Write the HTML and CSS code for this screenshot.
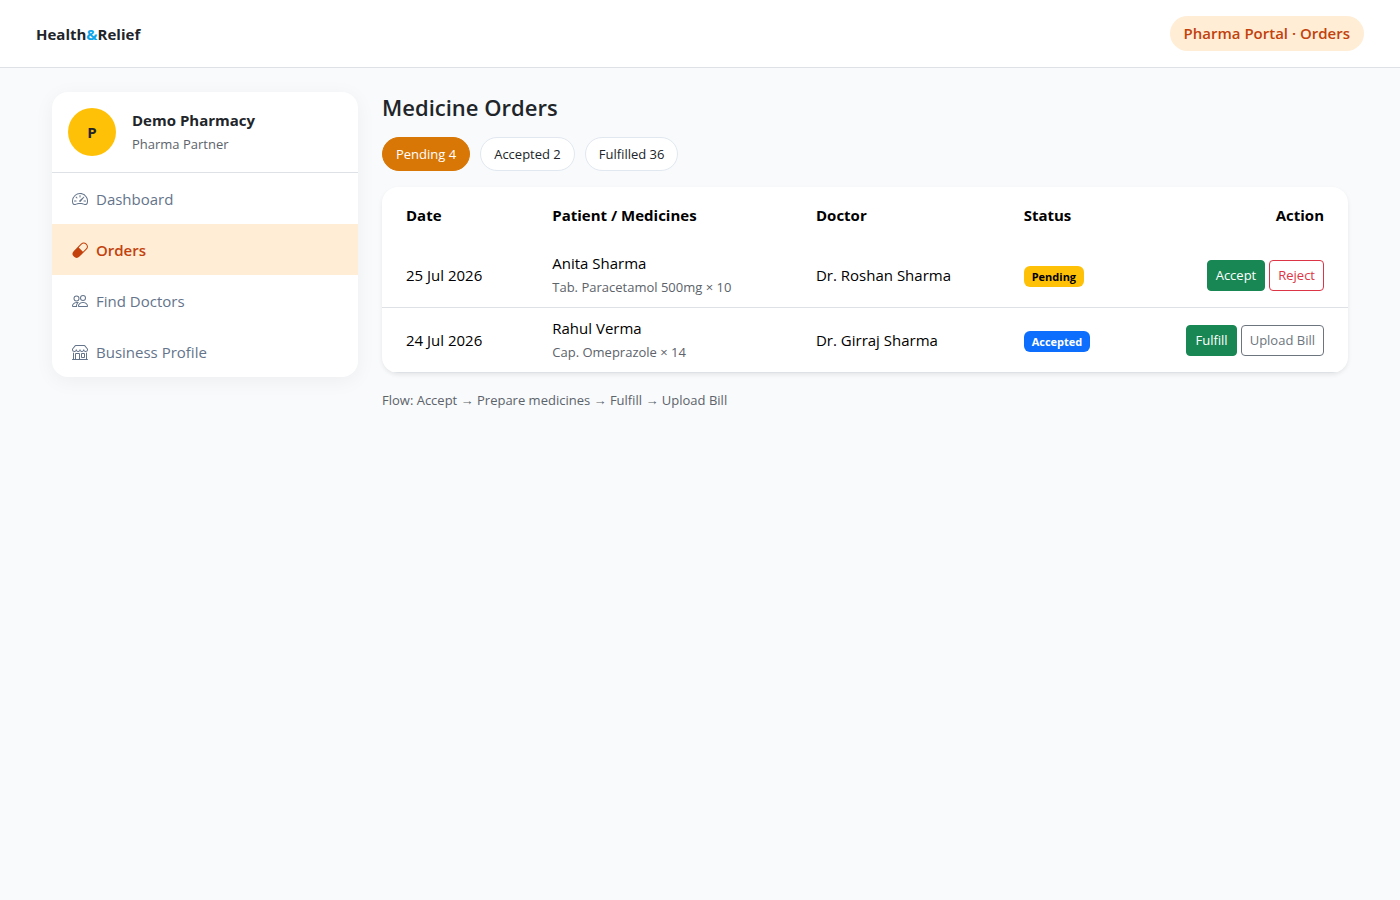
FILE: index.html
```html
<!DOCTYPE html>
<html lang="en">
<head>
    <meta charset="UTF-8">
    <meta name="viewport" content="width=device-width, initial-scale=1.0">
    <title>Orders - Health&amp;Relief</title>
    <link rel="stylesheet" href="styles.css">
</head>
<body>
    <header class="topbar">
        <a href="#" class="brand">Health<span>&amp;</span>Relief</a>
        <div class="portal-badge">Pharma Portal · Orders</div>
    </header>

    <div class="container">
        <aside class="sidebar">
            <div class="profile">
                <div class="avatar">P</div>
                <div>
                    <div class="profile-name">Demo Pharmacy</div>
                    <div class="small">Pharma Partner</div>
                </div>
            </div>
            <nav class="menu">
                <a href="#">
                    <svg width="16" height="16" viewBox="0 0 16 16" fill="currentColor" aria-hidden="true">
                        <path d="M8 4a.5.5 0 0 1 .5.5V6a.5.5 0 0 1-1 0V4.5A.5.5 0 0 1 8 4M3.732 5.732a.5.5 0 0 1 .707 0l.915.914a.5.5 0 1 1-.708.708l-.914-.915a.5.5 0 0 1 0-.707M2 10a.5.5 0 0 1 .5-.5h1.586a.5.5 0 0 1 0 1H2.5A.5.5 0 0 1 2 10m9.5 0a.5.5 0 0 1 .5-.5h1.5a.5.5 0 0 1 0 1H12a.5.5 0 0 1-.5-.5m.754-4.246a.39.39 0 0 0-.527-.02L7.547 9.31a.91.91 0 1 0 1.302 1.258l3.434-4.297a.39.39 0 0 0-.029-.518z"/>
                        <path fill-rule="evenodd" d="M0 10a8 8 0 1 1 15.547 2.661c-.442 1.253-1.845 1.602-2.932 1.25C11.309 13.488 9.475 13 8 13c-1.474 0-3.31.488-4.615.911-1.087.352-2.49.003-2.932-1.25A8 8 0 0 1 0 10m8-7a7 7 0 0 0-6.603 9.329c.203.575.923.876 1.68.63C4.397 12.533 6.358 12 8 12s3.604.532 4.923.96c.757.245 1.477-.056 1.68-.631A7 7 0 0 0 8 3"/>
                    </svg>
                    Dashboard
                </a>
                <a href="#" class="active">
                    <svg width="16" height="16" viewBox="0 0 16 16" fill="currentColor" aria-hidden="true">
                        <path d="M1.828 8.9 8.9 1.827a4 4 0 1 1 5.657 5.657l-7.07 7.071A4 4 0 1 1 1.827 8.9Zm9.128.771 2.893-2.893a3 3 0 1 0-4.243-4.242L6.713 5.429z"/>
                    </svg>
                    Orders
                </a>
                <a href="#">
                    <svg width="16" height="16" viewBox="0 0 16 16" fill="currentColor" aria-hidden="true">
                        <path d="M15 14s1 0 1-1-1-4-5-4-5 3-5 4 1 1 1 1zm-7.978-1L7 12.996c.001-.264.167-1.03.76-1.72C8.312 10.629 9.282 10 11 10c1.717 0 2.687.63 3.24 1.276.593.69.758 1.457.76 1.72l-.008.002-.014.002zM11 7a2 2 0 1 0 0-4 2 2 0 0 0 0 4m3-2a3 3 0 1 1-6 0 3 3 0 0 1 6 0M6.936 9.28a6 6 0 0 0-1.23-.247A7 7 0 0 0 5 9c-4 0-5 3-5 4q0 1 1 1h4.216A2.24 2.24 0 0 1 5 13c0-1.01.377-2.042 1.09-2.904.243-.294.526-.569.846-.816M4.92 10A5.5 5.5 0 0 0 4 13H1c0-.26.164-1.03.76-1.724.545-.636 1.492-1.256 3.16-1.275ZM1.5 5.5a3 3 0 1 1 6 0 3 3 0 0 1-6 0m3-2a2 2 0 1 0 0 4 2 2 0 0 0 0-4"/>
                    </svg>
                    Find Doctors
                </a>
                <a href="#">
                    <svg width="16" height="16" viewBox="0 0 16 16" fill="currentColor" aria-hidden="true">
                        <path d="M2.97 1.35A1 1 0 0 1 3.73 1h8.54a1 1 0 0 1 .76.35l2.609 3.044A1.5 1.5 0 0 1 16 5.37v.255a2.375 2.375 0 0 1-4.25 1.458A2.37 2.37 0 0 1 9.875 8 2.37 2.37 0 0 1 8 7.083 2.37 2.37 0 0 1 6.125 8a2.37 2.37 0 0 1-1.875-.917A2.375 2.375 0 0 1 0 5.625V5.37a1.5 1.5 0 0 1 .361-.976zm1.78 4.275a1.375 1.375 0 0 0 2.75 0 .5.5 0 0 1 1 0 1.375 1.375 0 0 0 2.75 0 .5.5 0 0 1 1 0 1.375 1.375 0 1 0 2.75 0V5.37a.5.5 0 0 0-.12-.325L12.27 2H3.73L1.12 5.045A.5.5 0 0 0 1 5.37v.255a1.375 1.375 0 0 0 2.75 0 .5.5 0 0 1 1 0M1.5 8.5A.5.5 0 0 1 2 9v6h1v-5a1 1 0 0 1 1-1h3a1 1 0 0 1 1 1v5h6V9a.5.5 0 0 1 1 0v6h.5a.5.5 0 0 1 0 1H.5a.5.5 0 0 1 0-1H1V9a.5.5 0 0 1 .5-.5M4 15h3v-5H4zm5-5a1 1 0 0 1 1-1h2a1 1 0 0 1 1 1v3a1 1 0 0 1-1 1h-2a1 1 0 0 1-1-1zm3 0h-2v3h2z"/>
                    </svg>
                    Business Profile
                </a>
            </nav>
        </aside>

        <main class="content">
            <h1>Medicine Orders</h1>

            <div class="tabs">
                <button type="button" class="tab active">Pending 4</button>
                <button type="button" class="tab">Accepted 2</button>
                <button type="button" class="tab">Fulfilled 36</button>
            </div>

            <div class="card">
                <table class="orders">
                    <thead>
                        <tr>
                            <th class="col-date">Date</th>
                            <th class="col-patient">Patient / Medicines</th>
                            <th class="col-doctor">Doctor</th>
                            <th class="col-status">Status</th>
                            <th class="col-action">Action</th>
                        </tr>
                    </thead>
                    <tbody>
                        <tr>
                            <td>25 Jul 2026</td>
                            <td>Anita Sharma<div class="small">Tab. Paracetamol 500mg × 10</div></td>
                            <td>Dr. Roshan Sharma</td>
                            <td><span class="badge badge-pending">Pending</span></td>
                            <td>
                                <div class="actions">
                                    <button type="button" class="btn btn-success">Accept</button>
                                    <button type="button" class="btn btn-danger">Reject</button>
                                </div>
                            </td>
                        </tr>
                        <tr>
                            <td>24 Jul 2026</td>
                            <td>Rahul Verma<div class="small">Cap. Omeprazole × 14</div></td>
                            <td>Dr. Girraj Sharma</td>
                            <td><span class="badge badge-accepted">Accepted</span></td>
                            <td>
                                <div class="actions">
                                    <button type="button" class="btn btn-success">Fulfill</button>
                                    <button type="button" class="btn btn-secondary">Upload Bill</button>
                                </div>
                            </td>
                        </tr>
                    </tbody>
                </table>
            </div>

            <p class="flow small">Flow: Accept → Prepare medicines → Fulfill → Upload Bill</p>
        </main>
    </div>
</body>
</html>
```
FILE: styles.css
```css
* {
    box-sizing: border-box;
}

body {
    margin: 0;
    font-family: "Segoe UI", "Open Sans", "Noto Sans", sans-serif;
    font-size: 15px;
    line-height: 24px;
    color: #212529;
    background-color: #f8fafc;
}

a {
    color: inherit;
    text-decoration: none;
}

button {
    font-family: inherit;
    cursor: pointer;
}

.small {
    font-size: 13px;
    color: #5c636a;
}

/* Top bar */
.topbar {
    display: flex;
    justify-content: space-between;
    align-items: center;
    padding: 16px 36px;
    background-color: #fff;
    border-bottom: 1px solid #dee2e6;
}

.brand {
    font-weight: 700;
}

.brand span {
    color: #0ea5e9;
}

.portal-badge {
    padding: 6px 14px;
    line-height: 23px;
    font-weight: 600;
    color: #c2410c;
    background-color: #ffedd5;
    border-radius: 20px;
}

/* Page layout */
.container {
    display: grid;
    grid-template-columns: minmax(0, 306fr) minmax(0, 966fr);
    gap: 24px;
    align-items: start;
    max-width: 1320px;
    margin: 0 auto;
    padding: 24px 12px;
}

/* Sidebar */
.sidebar {
    background-color: #fff;
    border-radius: 16px;
    box-shadow: 0 4px 20px rgba(0, 0, 0, 0.05);
    overflow: hidden;
}

.profile {
    display: flex;
    align-items: center;
    gap: 16px;
    padding: 16px;
    border-bottom: 1px solid #dee2e6;
}

.avatar {
    display: flex;
    align-items: center;
    justify-content: center;
    width: 48px;
    height: 48px;
    font-weight: 700;
    background-color: #ffc107;
    border-radius: 50%;
}

.profile-name {
    font-weight: 700;
}

.menu a {
    display: flex;
    align-items: center;
    gap: 8px;
    padding: 14px 20px 13px;
    color: #64748b;
}

.menu a.active {
    font-weight: 600;
    color: #c2410c;
    background-color: #ffedd5;
}

/* Orders */
h1 {
    margin: 0 0 15px;
    font-size: 22px;
    font-weight: 600;
    line-height: 30px;
}

.tabs {
    display: flex;
    gap: 10px;
    margin-bottom: 16px;
}

.tab {
    padding: 6px 13px;
    font-size: 13px;
    line-height: 20px;
    color: #212529;
    background-color: #fff;
    border: 1px solid #e2e8f0;
    border-radius: 20px;
}

.tab.active {
    color: #fff;
    background-color: #d97706;
    border-color: #d97706;
}

.card {
    background-color: #fff;
    border-radius: 16px;
    box-shadow: 0 2px 4px rgba(0, 0, 0, 0.08);
    overflow: hidden;
}

.orders {
    width: 100%;
    table-layout: fixed;
    border-collapse: collapse;
    color: #000;
}

.orders th {
    padding: 16px 8px;
    font-weight: 700;
    text-align: left;
}

.orders td {
    padding: 8px;
    vertical-align: middle;
    border-bottom: 1px solid #dee2e6;
}

.orders th:first-child,
.orders td:first-child {
    padding-left: 24px;
}

.orders th:last-child,
.orders td:last-child {
    padding-right: 24px;
    text-align: right;
}

.col-date {
    width: 16.8%;
}

.col-patient {
    width: 27.3%;
}

.col-doctor {
    width: 21.5%;
}

.col-status {
    width: 12%;
}

.badge {
    display: inline-block;
    padding: 4px 8px;
    font-size: 11px;
    font-weight: 700;
    line-height: 13px;
    vertical-align: middle;
    border-radius: 6px;
}

.badge-pending {
    color: #000;
    background-color: #ffc107;
}

.badge-accepted {
    color: #fff;
    background-color: #0d6efd;
}

.actions {
    display: flex;
    justify-content: flex-end;
    gap: 4px;
}

.btn {
    padding: 4px 8px;
    font-size: 13px;
    line-height: 21px;
    background-color: transparent;
    border: 1px solid;
    border-radius: 4px;
}

.btn-success {
    color: #fff;
    background-color: #198754;
    border-color: #198754;
}

.btn-danger {
    color: #dc3545;
}

.btn-secondary {
    color: #6c757d;
}

.flow {
    margin: 16px 0 0;
    line-height: 22px;
}
```
